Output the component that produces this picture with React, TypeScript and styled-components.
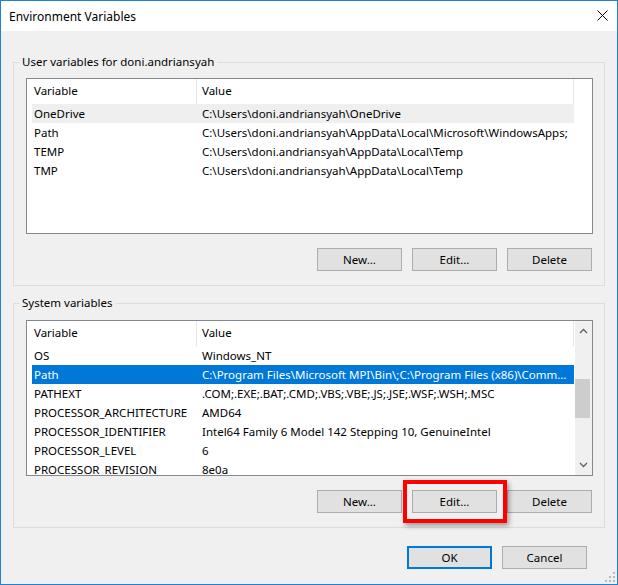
import styled, { createGlobalStyle, css } from 'styled-components';

const GlobalStyle = createGlobalStyle`
  html, body {
    margin: 0;
    padding: 0;
    background: #ffffff;
  }
  body {
    font-family: "Noto Sans", "Open Sans", sans-serif;
    font-size: 11.5px;
    color: #000000;
  }
  * {
    box-sizing: border-box;
  }
`;

type EnvVar = { name: string; value: string };
type RowState = 'hover' | 'selected';

const USER_VARS: EnvVar[] = [
  { name: 'OneDrive', value: 'C:\\Users\\doni.andriansyah\\OneDrive' },
  { name: 'Path', value: 'C:\\Users\\doni.andriansyah\\AppData\\Local\\Microsoft\\WindowsApps;' },
  { name: 'TEMP', value: 'C:\\Users\\doni.andriansyah\\AppData\\Local\\Temp' },
  { name: 'TMP', value: 'C:\\Users\\doni.andriansyah\\AppData\\Local\\Temp' },
];

const SYSTEM_VARS: EnvVar[] = [
  { name: 'OS', value: 'Windows_NT' },
  {
    name: 'Path',
    value:
      'C:\\Program Files\\Microsoft MPI\\Bin\\;C:\\Program Files (x86)\\Common Files\\Oracle\\Java\\javapath;C:\\WINDOWS\\system32',
  },
  { name: 'PATHEXT', value: '.COM;.EXE;.BAT;.CMD;.VBS;.VBE;.JS;.JSE;.WSF;.WSH;.MSC' },
  { name: 'PROCESSOR_ARCHITECTURE', value: 'AMD64' },
  { name: 'PROCESSOR_IDENTIFIER', value: 'Intel64 Family 6 Model 142 Stepping 10, GenuineIntel' },
  { name: 'PROCESSOR_LEVEL', value: '6' },
  { name: 'PROCESSOR_REVISION', value: '8e0a' },
  { name: 'PSModulePath', value: '%ProgramFiles%\\WindowsPowerShell\\Modules;' },
];

const Window = styled.div`
  position: relative;
  width: 618px;
  height: 585px;
  border: 1px solid #1883d7;
  background: #f0f0f0;
  display: flex;
  flex-direction: column;
`;

const TitleBar = styled.div`
  height: 30px;
  flex: 0 0 auto;
  background: #ffffff;
  display: flex;
  align-items: center;
  justify-content: space-between;
  padding-left: 8px;
`;

const Title = styled.span`
  font-size: 12px;
  line-height: 16px;
  padding-top: 1px;
`;

const CloseButton = styled.div`
  width: 30px;
  height: 30px;
  display: flex;
  align-items: center;
  justify-content: center;
  padding-bottom: 1px;
`;

const Content = styled.div`
  flex: 1;
  display: flex;
  flex-direction: column;
  padding: 23px 12px 0 12px;
`;

// $gap: distance from the frame line to the top of the list
const GroupBox = styled.fieldset<{ $gap: number }>`
  margin: 0;
  min-width: 0;
  border: 1px solid #dcdcdc;
  padding: ${({ $gap }) => $gap - 8}px 11px 14px 12px;
  display: flex;
  flex-direction: column;

  & + & {
    margin-top: 9px;
  }
`;

const Legend = styled.legend`
  padding: 0 3px;
  margin-left: -7px;
  line-height: 16px;
`;

const ListView = styled.div`
  height: 156px;
  border: 1px solid #828790;
  background: #ffffff;
  display: flex;
  overflow: hidden;
`;

const ListBody = styled.div`
  flex: 1;
  min-width: 0;
  display: flex;
  flex-direction: column;
  overflow: hidden;
`;

const HeaderRow = styled.div`
  display: flex;
  height: 25px;
  flex: 0 0 auto;
`;

const HeaderCell = styled.div<{ $width: number; $pad: number }>`
  width: ${({ $width }) => $width}px;
  flex: 0 0 auto;
  padding-left: ${({ $pad }) => $pad}px;
  border-right: 1px solid #e5e5e5;
  line-height: 24px;
  white-space: nowrap;
`;

const Row = styled.div<{ $state?: RowState }>`
  display: flex;
  flex: 0 0 auto;
  height: 19px;
  width: 542px;
  margin-left: 5px;
  line-height: 19px;
  ${({ $state }) =>
    $state === 'hover' &&
    css`
      background: #efefef;
    `}
  ${({ $state }) =>
    $state === 'selected' &&
    css`
      background: #0078d7;
      color: #ffffff;
    `}
`;

const Cell = styled.div<{ $width: number; $pad: number }>`
  width: ${({ $width }) => $width}px;
  flex: 0 0 auto;
  padding-left: ${({ $pad }) => $pad}px;
  padding-right: 6px;
  white-space: nowrap;
  overflow: hidden;
  text-overflow: ellipsis;
`;

const ScrollBar = styled.div`
  width: 17px;
  flex: 0 0 auto;
  display: flex;
  flex-direction: column;
  background: #f0f0f0;
`;

const ScrollArrow = styled.div`
  height: 20px;
  display: flex;
  align-items: center;
  justify-content: center;
`;

const ScrollTrack = styled.div`
  flex: 1;
  display: flex;
  flex-direction: column;
`;

const ScrollThumb = styled.div`
  margin-top: 38px;
  height: 39px;
  width: 15px;
  background: #cdcdcd;
`;

const ButtonRow = styled.div`
  display: flex;
  justify-content: flex-end;
  gap: 10px;
  margin-top: 14px;
  padding-right: 1px;
`;

const Button = styled.button<{ $default?: boolean }>`
  width: 85px;
  height: 23px;
  margin: 0;
  padding: 0;
  font: inherit;
  color: #000000;
  background: #e1e1e1;
  border: 1px solid #adadad;
  ${({ $default }) =>
    $default &&
    css`
      border: 2px solid #0078d7;
    `}
`;

const Spotlight = styled.div`
  position: relative;
`;

const Callout = styled.div`
  position: absolute;
  top: -10px;
  left: -9px;
  right: -10px;
  bottom: -10px;
  border: 4px solid #ff0000;
  box-shadow: 2px 3px 5px rgba(0, 0, 0, 0.35);
  pointer-events: none;
`;

const Footer = styled.div`
  display: flex;
  justify-content: flex-end;
  gap: 10px;
  margin-top: 18px;
  padding-right: 18px;
`;

const Grip = styled.svg`
  position: absolute;
  right: 2px;
  bottom: 2px;
`;

const Chevron = ({ up }: { up?: boolean }) => (
  <svg width="9" height="6" viewBox="0 0 9 6">
    <polyline
      points={up ? '1,5 4.5,1.5 8,5' : '1,1 4.5,4.5 8,1'}
      fill="none"
      stroke="#606060"
      strokeWidth="1.3"
    />
  </svg>
);

function VariableList({
  items,
  activeRow,
  activeState,
  scrollable,
}: {
  items: EnvVar[];
  activeRow: number;
  activeState: RowState;
  scrollable?: boolean;
}) {
  return (
    <ListView>
      <ListBody>
        <HeaderRow>
          <HeaderCell $width={170} $pad={7}>
            Variable
          </HeaderCell>
          <HeaderCell $width={377} $pad={5}>
            Value
          </HeaderCell>
        </HeaderRow>
        {items.map((item, i) => (
          <Row key={item.name} $state={i === activeRow ? activeState : undefined}>
            <Cell $width={165} $pad={2}>
              {item.name}
            </Cell>
            <Cell $width={377} $pad={5}>
              {item.value}
            </Cell>
          </Row>
        ))}
      </ListBody>
      {scrollable && (
        <ScrollBar>
          <ScrollArrow>
            <Chevron up />
          </ScrollArrow>
          <ScrollTrack>
            <ScrollThumb />
          </ScrollTrack>
          <ScrollArrow>
            <Chevron />
          </ScrollArrow>
        </ScrollBar>
      )}
    </ListView>
  );
}

function App() {
  return (
    <>
      <GlobalStyle />
      <Window>
        <TitleBar>
          <Title>Environment Variables</Title>
          <CloseButton>
            <svg width="11" height="11" viewBox="0 0 11 11">
              <path d="M0.5 0.5 L10.5 10.5 M10.5 0.5 L0.5 10.5" stroke="#000" strokeWidth="1" />
            </svg>
          </CloseButton>
        </TitleBar>
        <Content>
          <GroupBox $gap={16}>
            <Legend>User variables for doni.andriansyah</Legend>
            <VariableList items={USER_VARS} activeRow={0} activeState="hover" />
            <ButtonRow>
              <Button>New...</Button>
              <Button>Edit...</Button>
              <Button>Delete</Button>
            </ButtonRow>
          </GroupBox>
          <GroupBox $gap={17}>
            <Legend>System variables</Legend>
            <VariableList items={SYSTEM_VARS} activeRow={1} activeState="selected" scrollable />
            <ButtonRow>
              <Button>New...</Button>
              <Spotlight>
                <Button>Edit...</Button>
                <Callout />
              </Spotlight>
              <Button>Delete</Button>
            </ButtonRow>
          </GroupBox>
          <Footer>
            <Button $default>OK</Button>
            <Button>Cancel</Button>
          </Footer>
        </Content>
        <Grip width="10" height="10" viewBox="0 0 10 10">
          {[
            [8, 0],
            [8, 4],
            [4, 4],
            [8, 8],
            [4, 8],
            [0, 8],
          ].map(([x, y]) => (
            <rect key={`${x}-${y}`} x={x} y={y} width="2" height="2" fill="#b8b8b8" />
          ))}
        </Grip>
      </Window>
    </>
  );
}

export default App;
